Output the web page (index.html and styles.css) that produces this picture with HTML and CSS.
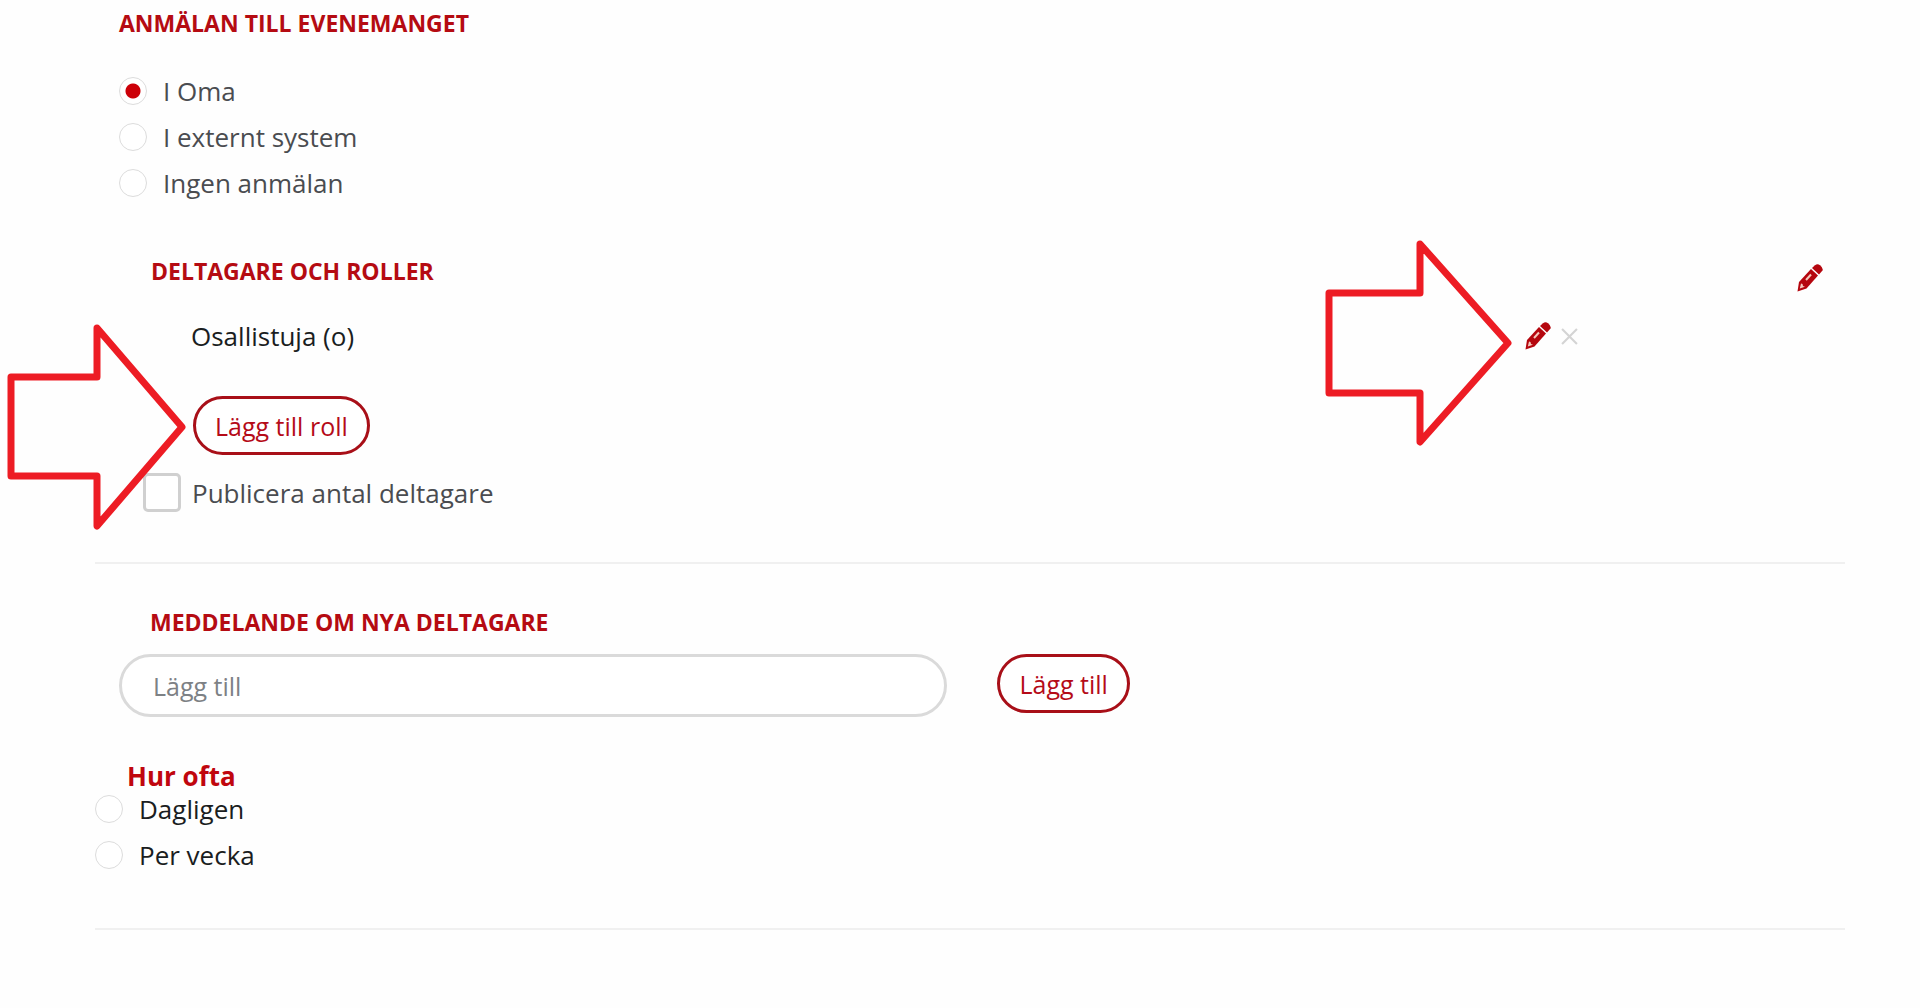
FILE: index.html
```html
<!DOCTYPE html>
<html lang="sv">
<head>
    <meta charset="UTF-8">
    <meta name="viewport" content="width=device-width, initial-scale=1.0">
    <title>Anmälan till evenemanget</title>
    <link rel="stylesheet" href="styles.css">
</head>
<body>

    <svg class="symbols" aria-hidden="true">
        <symbol id="pencil" viewBox="0 0 26 28">
            <path class="pencil-body" d="M0.5 27.5 L2 18 L14 5 L21 11.5 L9.5 24.5 Z"/>
            <path class="pencil-body" d="M15 4 L18 1.2 Q20.5 -0.5 23 1.2 Q26.5 4 25.5 6.5 L22 10.5 Z"/>
            <path class="pencil-shine" d="M9 16 L14 10.5"/>
            <path class="pencil-tip" d="M2.8 24.5 L4 19.5 L5.5 20 L6 22 L8 22.8 Z"/>
        </symbol>
    </svg>

    <main class="page">
        <section class="signup">
            <h2 class="title">ANMÄLAN TILL EVENEMANGET</h2>
            <div class="options">
                <label class="option"><input type="radio" name="signup" checked>I Oma</label>
                <label class="option"><input type="radio" name="signup">I externt system</label>
                <label class="option"><input type="radio" name="signup">Ingen anmälan</label>
            </div>
        </section>

        <section class="roles">
            <div class="roles-header">
                <h2 class="title">DELTAGARE OCH ROLLER</h2>
                <button class="icon-button" aria-label="Redigera deltagare"><svg class="pencil"><use href="#pencil"/></svg></button>
            </div>
            <div class="role-row">
                <span>Osallistuja (o)</span>
                <div class="role-actions">
                    <svg class="arrow arrow-edit" viewBox="0 0 190 210" aria-hidden="true"><path d="M4 55 H95 V6 L183 105 L95 204 V155 H4 Z"/></svg>
                    <button class="icon-button" aria-label="Redigera roll"><svg class="pencil"><use href="#pencil"/></svg></button>
                    <button class="icon-button" aria-label="Ta bort roll"><svg class="cross" viewBox="0 0 16 16"><path d="M1 1 L15 15 M15 1 L1 15"/></svg></button>
                </div>
            </div>
            <div class="add-role">
                <button class="button">Lägg till roll</button>
                <svg class="arrow arrow-add" viewBox="0 0 180 210" aria-hidden="true"><path d="M4 55 H90 V6 L175 105 L90 204 V154 H4 Z"/></svg>
            </div>
            <label class="publish"><input type="checkbox">Publicera antal deltagare</label>
        </section>

        <section class="messages">
            <h2 class="title">MEDDELANDE OM NYA DELTAGARE</h2>
            <div class="message-row">
                <input type="text" class="message-input" placeholder="Lägg till" aria-label="Meddelande om nya deltagare">
                <button class="button">Lägg till</button>
            </div>
            <h3 class="subtitle">Hur ofta</h3>
            <div class="options">
                <label class="option"><input type="radio" name="frequency">Dagligen</label>
                <label class="option"><input type="radio" name="frequency">Per vecka</label>
            </div>
        </section>
    </main>

</body>
</html>
```
FILE: styles.css
```css
* {
    box-sizing: border-box;
}

body {
    margin: 0;
    background: #fefefe;
    color: #1a1d21;
    font-family: "Open Sans", "Noto Sans", sans-serif;
    font-size: 26px;
    line-height: 32px;
}

button, input {
    font: inherit;
}

.symbols {
    display: none;
}

.page {
    padding: 7px 75px 0 95px;
}

.title {
    margin: 0;
    color: #b50b12;
    font-size: 23px;
    font-weight: 700;
    line-height: 32px;
}

/* radio groups */
.signup {
    padding-left: 24px;
}

.options {
    display: flex;
    flex-direction: column;
    gap: 14px;
}

.signup .options {
    margin-top: 36px;
    color: #4a4c50;
}

.option {
    display: flex;
    align-items: center;
    align-self: flex-start;
    gap: 16px;
}

.option input {
    appearance: none;
    width: 28px;
    height: 28px;
    margin: 0;
    border: 1px solid #dcdcdc;
    border-radius: 50%;
    background: #fff;
}

.option input:checked {
    background: radial-gradient(circle, #cc0008 7px, #fff 8px);
}

/* roles */
.roles {
    padding: 56px 22px 50px 48px;
    border-bottom: 2px solid #f0f0f0;
}

.roles-header {
    display: flex;
    justify-content: space-between;
    align-items: flex-start;
    padding-left: 8px;
}

.roles-header .icon-button {
    margin-top: 9px;
}

.role-row {
    display: flex;
    justify-content: space-between;
    margin: 28px 245px 0 48px;
}

.role-actions {
    display: flex;
    align-items: center;
    gap: 10px;
    position: relative;
}

.icon-button {
    display: flex;
    padding: 0;
    border: none;
    background: none;
    cursor: pointer;
}

.pencil {
    width: 26px;
    height: 28px;
}

.pencil-body {
    fill: #b5060e;
}

.pencil-shine {
    fill: none;
    stroke: #f5c9bd;
    stroke-width: 2;
}

.pencil-tip {
    fill: #f5c9bd;
}

.cross {
    width: 17px;
    height: 17px;
    fill: none;
    stroke: #d4d4d4;
    stroke-width: 2;
}

.add-role {
    position: relative;
    width: fit-content;
    margin: 44px 0 0 50px;
}

.button {
    height: 59px;
    padding: 0 19px;
    border: 3px solid #a80f18;
    border-radius: 30px;
    background: #fff;
    color: #b50b18;
    font-size: 25px;
    cursor: pointer;
}

/* arrows lie over the form and point at a button */
.arrow {
    position: absolute;
    right: 100%;
    height: 210px;
    fill: none;
    stroke: #ed1c24;
    stroke-width: 7;
    stroke-linejoin: round;
    pointer-events: none;
}

.arrow-add {
    top: -74px;
    width: 180px;
    margin-right: 6px;
}

.arrow-edit {
    top: -82px;
    width: 190px;
    margin-right: 10px;
}

.publish {
    display: flex;
    align-items: center;
    width: fit-content;
    gap: 11px;
    margin-top: 18px;
    color: #4a4c50;
}

.publish input {
    appearance: none;
    width: 38px;
    height: 39px;
    margin: 0;
    border: 3px solid #d0d0d0;
    border-radius: 5px;
    background: #fff;
}

/* messages */
.messages {
    padding: 42px 0 57px;
    border-bottom: 2px solid #f0f0f0;
}

.messages .title {
    padding-left: 55px;
}

.message-row {
    display: flex;
    align-items: flex-start;
    gap: 50px;
    margin: 16px 0 0 24px;
}

.message-input {
    width: 48%;
    height: 63px;
    padding: 0 31px;
    border: 3px solid #dadada;
    border-radius: 32px;
    background: #fff;
    font-size: 25px;
}

.message-input::placeholder {
    color: #7d8185;
    opacity: 1;
}

.subtitle {
    margin: 43px 0 0 32px;
    color: #c0060e;
    font-size: 26px;
    font-weight: 700;
    line-height: 33px;
}
```
